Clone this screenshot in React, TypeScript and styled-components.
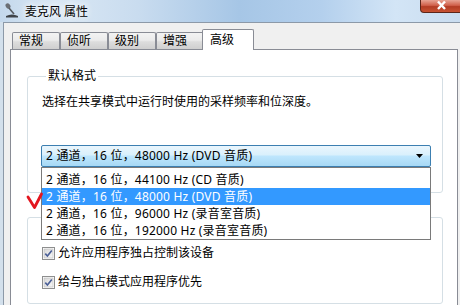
import styled, { createGlobalStyle } from 'styled-components';

const GlobalStyle = createGlobalStyle`
    html, body {
        margin: 0;
        padding: 0;
        background: #f0f0f0;
    }
    body {
        font-family: 'Noto Sans', 'Noto Sans CJK SC', sans-serif;
        font-size: 12px;
        color: #000;
    }
`;

const formats = [
    '2 通道，16 位，44100 Hz (CD 音质)',
    '2 通道，16 位，48000 Hz (DVD 音质)',
    '2 通道，16 位，96000 Hz (录音室音质)',
    '2 通道，16 位，192000 Hz (录音室音质)',
];

const Window = styled.div`
    width: 460px;
    height: 305px;
    overflow: hidden;
    display: flex;
    flex-direction: column;
    background: #d3e0ec;
`;

const TitleBar = styled.div`
    height: 22px;
    flex-shrink: 0;
    display: flex;
    align-items: flex-start;
    background: linear-gradient(90deg, #c4d8ec 0%, #d9e7f4 12%, #c9dcef 30%, #a6c6e6 52%, #b4d0ed 70%, #d3e5f6 86%, #c9dcef 100%);
`;

const TitleIcon = styled.svg`
    margin: 2px 0 0 4px;
    flex-shrink: 0;
`;

const TitleText = styled.span`
    margin: 4px 0 0 5px;
    line-height: 16px;
    text-shadow: 0 0 6px #fff, 0 0 10px #fff;
`;

const CloseButton = styled.div`
    margin-left: auto;
    margin-right: -3px;
    width: 43px;
    height: 13px;
    box-sizing: border-box;
    border: 1px solid #5c2519;
    border-top: none;
    border-radius: 0 0 4px 4px;
    background: linear-gradient(180deg, #e8a494 0%, #d0604a 45%, #b33c24 55%, #c75232 100%);
    display: flex;
    justify-content: center;
    align-items: flex-start;
`;

const Body = styled.div`
    flex: 1;
    margin-left: 3px;
    border-top: 1px solid #8c99a8;
    border-left: 1px solid #8c99a8;
    background: #f0f0f0;
    padding: 6px 2px 0 6px;
    display: flex;
    flex-direction: column;
    min-height: 0;
`;

const TabRow = styled.div`
    display: flex;
    align-items: flex-end;
    height: 20px;
    padding-left: 2px;
`;

const Tab = styled.div<{ $active?: boolean }>`
    box-sizing: border-box;
    position: relative;
    z-index: ${({ $active }) => ($active ? 2 : 0)};
    width: ${({ $active }) => ($active ? 52 : 48)}px;
    height: ${({ $active }) => ($active ? 21 : 17)}px;
    margin-left: ${({ $active }) => ($active ? -2 : 0)}px;
    margin-bottom: ${({ $active }) => ($active ? -1 : 0)}px;
    padding: ${({ $active }) => ($active ? '2px 0 0 7px' : '0 0 0 6px')};
    border: 1px solid #898c95;
    border-bottom: none;
    border-radius: 2px 2px 0 0;
    background: ${({ $active }) =>
        $active ? '#fff' : 'linear-gradient(180deg, #f3f3f3 0%, #ebebeb 45%, #dddddd 55%, #cfcfcf 100%)'};
    line-height: 16px;
`;

const Panel = styled.div`
    position: relative;
    z-index: 1;
    flex: 1;
    background: #fff;
    border: 1px solid #898c95;
    border-bottom: none;
    padding: 0 14px 0 16px;
`;

const GroupBox = styled.fieldset<{ $top: number; $bottom: number }>`
    margin: ${({ $top }) => $top}px 0 0 0;
    padding: 0 0 ${({ $bottom }) => $bottom}px 14px;
    border: 1px solid #d5dfe5;
    border-radius: 3px;
    min-width: 0;
`;

const Legend = styled.legend`
    margin-left: 4px;
    padding: 0 2px;
    line-height: 16px;
`;

const Description = styled.p`
    margin: 10px 0 0 0;
    line-height: 16px;
`;

const SelectWrap = styled.div`
    position: relative;
    margin: 35px 0 0 -1px;
    width: 390px;
`;

const SelectBox = styled.div`
    box-sizing: border-box;
    height: 22px;
    border: 1px solid #3c7fb1;
    border-radius: 2px;
    background: linear-gradient(180deg, #eaf6fd 0%, #d9f0fc 45%, #bee6fd 50%, #a7d9f5 100%);
    display: flex;
    align-items: center;
    padding: 0 7px 0 4px;
    line-height: 16px;
`;

const SelectText = styled.span`
    flex: 1;
    letter-spacing: 0.2px;
`;

const DropList = styled.ul`
    position: absolute;
    top: 100%;
    left: 0;
    width: 390px;
    box-sizing: border-box;
    margin: 0;
    padding: 3px 0 0 0;
    list-style: none;
    background: #fff;
    border: 1px solid #7a7a7a;
    z-index: 3;
`;

const DropItem = styled.li<{ $selected?: boolean }>`
    height: 17px;
    line-height: 17px;
    padding-left: 4px;
    letter-spacing: 0.2px;
    background: ${({ $selected }) => ($selected ? '#3399ff' : 'transparent')};
    color: ${({ $selected }) => ($selected ? '#fff' : '#000')};
`;

const CheckRow = styled.label<{ $top: number }>`
    display: flex;
    align-items: center;
    gap: 3px;
    margin-top: ${({ $top }) => $top}px;
    line-height: 16px;
`;

const RedMark = styled.svg`
    position: absolute;
    left: 15px;
    top: 142px;
    z-index: 4;
`;

const CheckBox = () => (
    <svg width='13' height='13' viewBox='0 0 13 13'>
        <defs>
            <linearGradient id='cbg' x1='0' y1='0' x2='1' y2='1'>
                <stop offset='0' stopColor='#d8d8d8' />
                <stop offset='1' stopColor='#f7f7f7' />
            </linearGradient>
        </defs>
        <rect x='0.5' y='0.5' width='12' height='12' fill='#fff' stroke='#8e8f8f' />
        <rect x='2' y='2' width='9' height='9' fill='url(#cbg)' stroke='#b9b9b9' strokeWidth='0.6' />
        <path d='M3.3 6.6 L5.4 9 L9.8 3.4' fill='none' stroke='#4a5f97' strokeWidth='1.6' />
    </svg>
);

const App = () => (
    <>
        <GlobalStyle />
        <Window>
            <TitleBar>
                <TitleIcon width='16' height='17' viewBox='0 0 16 17'>
                    <ellipse cx='4' cy='4' rx='2.2' ry='2.8' transform='rotate(-40 4 4)' fill='#6b6f75' />
                    <path d='M5 6 L10 12' stroke='#55595f' strokeWidth='1.6' />
                    <path d='M2 14 Q8 11 14 14 L14 15.5 L2 15.5 Z' fill='#3f4348' />
                </TitleIcon>
                <TitleText>麦克风 属性</TitleText>
                <CloseButton>
                    <svg width='13' height='11' viewBox='0 0 13 11'>
                        <path d='M3 1.5 L10 9 M10 1.5 L3 9' stroke='#fff' strokeWidth='2.4' />
                    </svg>
                </CloseButton>
            </TitleBar>
            <Body>
                <TabRow>
                    <Tab>常规</Tab>
                    <Tab>侦听</Tab>
                    <Tab>级别</Tab>
                    <Tab>增强</Tab>
                    <Tab $active>高级</Tab>
                </TabRow>
                <Panel>
                    <GroupBox $top={18} $bottom={25}>
                        <Legend>默认格式</Legend>
                        <Description>选择在共享模式中运行时使用的采样频率和位深度。</Description>
                        <SelectWrap>
                            <SelectBox>
                                <SelectText>{formats[1]}</SelectText>
                                <svg width='7' height='4' viewBox='0 0 7 4'>
                                    <path d='M0 0 L7 0 L3.5 4 Z' fill='#000' />
                                </svg>
                            </SelectBox>
                            <DropList>
                                {formats.map((f, i) => (
                                    <DropItem key={f} $selected={i === 1}>
                                        {f}
                                    </DropItem>
                                ))}
                            </DropList>
                        </SelectWrap>
                    </GroupBox>
                    <GroupBox $top={16} $bottom={13}>
                        <Legend>独占模式</Legend>
                        <CheckRow $top={20}>
                            <CheckBox />
                            允许应用程序独占控制该设备
                        </CheckRow>
                        <CheckRow $top={13}>
                            <CheckBox />
                            给与独占模式应用程序优先
                        </CheckRow>
                    </GroupBox>
                    <RedMark width='18' height='18' viewBox='0 0 18 18'>
                        <path d='M2 5 L8.5 15.5 L15.5 2' fill='none' stroke='#e3161f' strokeWidth='2.8' strokeLinecap='round' strokeLinejoin='round' />
                    </RedMark>
                </Panel>
            </Body>
        </Window>
    </>
);

export default App;
